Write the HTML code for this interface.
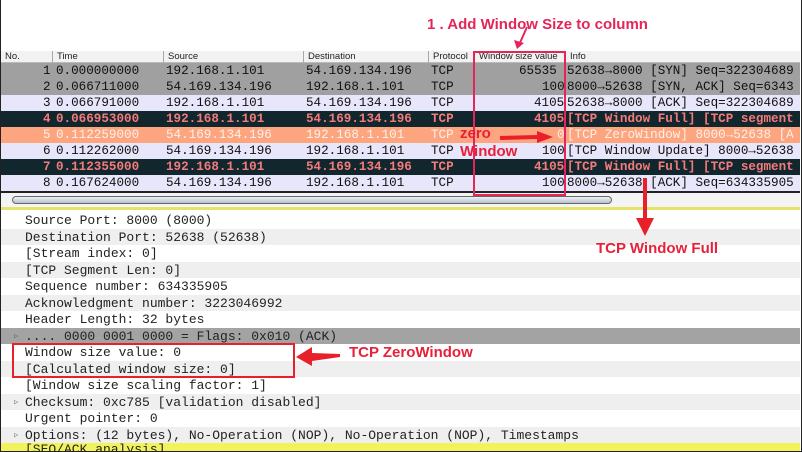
<!DOCTYPE html>
<html><head><meta charset="utf-8"><style>
*{margin:0;padding:0;box-sizing:border-box}
body{width:802px;height:452px;overflow:hidden;background:#fff;position:relative;font-family:"Liberation Mono",monospace;font-size:12.6px}
.frame{position:absolute;left:0;top:0;width:802px;height:452px;border:1px solid #222;border-top:none;pointer-events:none}
.hdr{position:absolute;top:51px;left:1px;width:799px;height:12px;background:#f2f2f2;border-bottom:1px solid #bbb;font-family:"Liberation Sans",sans-serif;font-size:9.5px;color:#222}
.hdr span{position:absolute;top:0;height:12px;line-height:12px;padding-left:4px;border-left:1px solid #aaa}
.row{position:absolute;left:1px;width:799px;height:16px;line-height:17px;white-space:nowrap;overflow:hidden}
.row span{position:absolute;top:0}
.g{background:#a0a0a0;color:#111}
.l{background:#e7e6fa;color:#111}
.d{background:#12262d;color:#f47b7b;font-weight:bold}
.o{background:#fca57f;color:#fff0ea}
.det{position:absolute;left:1px;width:799px;height:16.5px;line-height:17px;padding-left:24px;white-space:nowrap;color:#222;font-size:13px}
.det.a{background:#fff}.det.b{background:#efefef}
.tri{position:absolute;left:14px;font-size:7px;color:#555}
.ann{position:absolute;font-family:"Liberation Sans",sans-serif;font-weight:bold;color:#e8203a;font-size:15px;white-space:nowrap}
</style></head><body>
<div class="ann" style="left:427px;top:16px;color:#e5245a">1 . Add Window Size to column</div>
<div class="hdr">
<span style="left:0;border:none">No.</span>
<span style="left:51px">Time</span>
<span style="left:162px">Source</span>
<span style="left:302px">Destination</span>
<span style="left:427px">Protocol</span>
<span style="left:473px">Window size value</span>
<span style="left:564px">Info</span>
</div>
<div class="row g" style="top:63px"><span style="left:42px">1</span><span style="left:55px">0.000000000</span><span style="left:165px">192.168.1.101</span><span style="left:305px">54.169.134.196</span><span style="left:430px">TCP</span><span style="left:518px">65535</span><span style="left:566px">52638→8000 [SYN] Seq=322304689</span></div>
<div class="row g" style="top:79px"><span style="left:42px">2</span><span style="left:55px">0.066711000</span><span style="left:165px">54.169.134.196</span><span style="left:305px">192.168.1.101</span><span style="left:430px">TCP</span><span style="left:541px">100</span><span style="left:566px">8000→52638 [SYN, ACK] Seq=6343</span></div>
<div class="row l" style="top:95px"><span style="left:42px">3</span><span style="left:55px">0.066791000</span><span style="left:165px">192.168.1.101</span><span style="left:305px">54.169.134.196</span><span style="left:430px">TCP</span><span style="left:533px">4105</span><span style="left:566px">52638→8000 [ACK] Seq=322304689</span></div>
<div class="row d" style="top:111px"><span style="left:42px">4</span><span style="left:55px">0.066953000</span><span style="left:165px">192.168.1.101</span><span style="left:305px">54.169.134.196</span><span style="left:430px">TCP</span><span style="left:533px">4105</span><span style="left:566px">[TCP Window Full] [TCP segment</span></div>
<div class="row o" style="top:127px"><span style="left:42px">5</span><span style="left:55px">0.112259000</span><span style="left:165px">54.169.134.196</span><span style="left:305px">192.168.1.101</span><span style="left:430px">TCP</span><span style="left:556px">0</span><span style="left:566px">[TCP ZeroWindow] 8000→52638 [A</span></div>
<div class="row l" style="top:143px"><span style="left:42px">6</span><span style="left:55px">0.112262000</span><span style="left:165px">54.169.134.196</span><span style="left:305px">192.168.1.101</span><span style="left:430px">TCP</span><span style="left:541px">100</span><span style="left:566px">[TCP Window Update] 8000→52638</span></div>
<div class="row d" style="top:159px"><span style="left:42px">7</span><span style="left:55px">0.112355000</span><span style="left:165px">192.168.1.101</span><span style="left:305px">54.169.134.196</span><span style="left:430px">TCP</span><span style="left:533px">4105</span><span style="left:566px">[TCP Window Full] [TCP segment</span></div>
<div class="row l" style="top:175px"><span style="left:42px">8</span><span style="left:55px">0.167624000</span><span style="left:165px">54.169.134.196</span><span style="left:305px">192.168.1.101</span><span style="left:430px">TCP</span><span style="left:541px">100</span><span style="left:566px">8000→52638 [ACK] Seq=634335905</span></div>
<div style="position:absolute;left:1px;top:191px;width:799px;height:2px;background:#222"></div>
<div style="position:absolute;left:1px;top:193px;width:799px;height:14px;background:#f4f4f4"></div>
<div style="position:absolute;left:12px;top:196px;width:600px;height:8px;border:1px solid #666;border-radius:4px;background:linear-gradient(#eef2f6,#b8c2cc)"></div>
<div style="position:absolute;left:1px;top:207px;width:799px;height:3px;background:#e4e46a"></div>
<div style="position:absolute;left:473px;top:51px;width:93px;height:145px;border:2px solid #e5245a;z-index:5"></div>
<div class="det a" style="top:212px">Source Port: 8000 (8000)</div>
<div class="det b" style="top:228.5px">Destination Port: 52638 (52638)</div>
<div class="det a" style="top:245px">[Stream index: 0]</div>
<div class="det b" style="top:261.5px">[TCP Segment Len: 0]</div>
<div class="det a" style="top:278px">Sequence number: 634335905</div>
<div class="det b" style="top:294.5px">Acknowledgment number: 3223046992</div>
<div class="det a" style="top:311px">Header Length: 32 bytes</div>
<div class="det" style="top:327.5px;background:#a3a3a3">.... 0000 0001 0000 = Flags: 0x010 (ACK)</div>
<div class="det a" style="top:344px">Window size value: 0</div>
<div class="det b" style="top:360.5px">[Calculated window size: 0]</div>
<div class="det a" style="top:377px">[Window size scaling factor: 1]</div>
<div class="det b" style="top:393.5px">Checksum: 0xc785 [validation disabled]</div>
<div class="det a" style="top:410px">Urgent pointer: 0</div>
<div class="det b" style="top:426.5px">Options: (12 bytes), No-Operation (NOP), No-Operation (NOP), Timestamps</div>
<div class="det" style="top:443px;background:#f2f25a;height:8px;line-height:13px;overflow:hidden">[SEQ/ACK analysis]</div>
<div class="tri" style="top:332px">▷</div>
<div class="tri" style="top:398px">▷</div>
<div class="tri" style="top:431px">▷</div>
<div style="position:absolute;left:12px;top:343px;width:283px;height:35px;border:2.5px solid #e8202a;z-index:5"></div>
<div class="ann" style="left:349px;top:344px">TCP ZeroWindow</div>
<div class="ann" style="left:596px;top:240px">TCP Window Full</div>
<div class="ann" style="left:460px;top:125px;z-index:6">zero</div>
<div class="ann" style="left:460px;top:143px;z-index:6">Window</div>
<svg style="position:absolute;left:0;top:0;z-index:7" width="802" height="452">
<g fill="#e8202a">
<path d="M500 136 L537 135 L537 131 L553 137 L537 143 L537 139 L500 140Z"/>
<path d="M643 178 L647 178 L647 218 L654 218 L645 236 L636 218 L643 218Z"/>
<path d="M340 354 L312 353 L312 347 L296 357 L312 366 L312 361 L340 357Z"/>
</g>
<path d="M527 27 L519 45" stroke="#e5245a" stroke-width="2"/>
<path d="M514 40 L517 49 L524 43" fill="#e5245a"/>
</svg>
<div class="frame"></div>
</body></html>
